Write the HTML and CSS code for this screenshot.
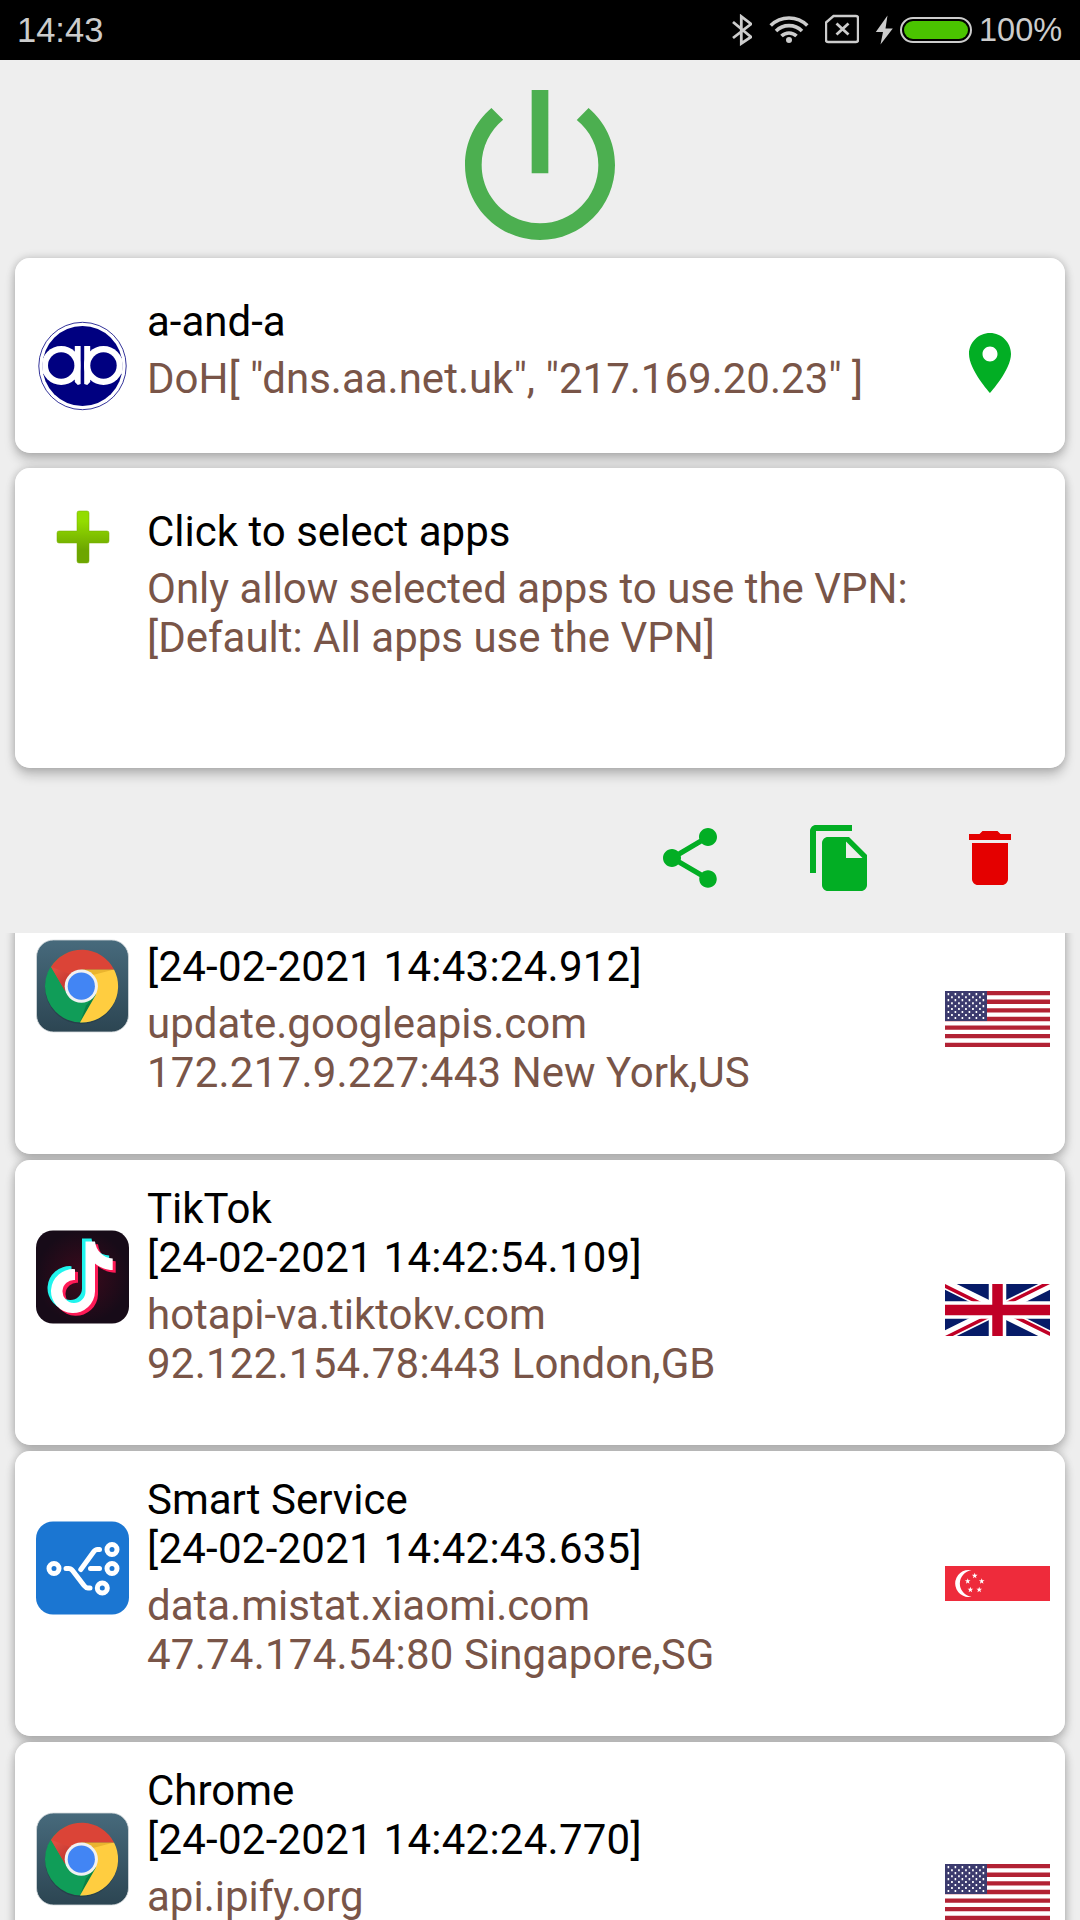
FILE: index.html
```html
<!DOCTYPE html>
<html lang="en">
<head>
<meta charset="utf-8">
<title>VPN</title>
<link rel="stylesheet" href="styles.css">
</head>
<body>
<svg class="defs" width="0" height="0" aria-hidden="true">
  <defs>
    <linearGradient id="slate" x1="0" y1="0" x2="0" y2="1"><stop offset="0" stop-color="#476a7c"/><stop offset="1" stop-color="#2c4552"/></linearGradient>
    <linearGradient id="redShade" x1="15" y1="30" x2="34" y2="50" gradientUnits="userSpaceOnUse"><stop offset="0.1" stop-color="#dd4e41"/><stop offset="1" stop-color="#c0302a"/></linearGradient>
    <linearGradient id="plusFill" x1="0" y1="0" x2="0" y2="1"><stop offset="0.2" stop-color="#93dc00"/><stop offset="0.75" stop-color="#6da600"/></linearGradient>
    <radialGradient id="night"><stop offset="0" stop-color="#3d0a1c"/><stop offset="1" stop-color="#170b18"/></radialGradient>
    <symbol id="chrome" viewBox="0 0 93 93">
      <rect x="0.5" y="0.5" width="92" height="92" rx="17" fill="url(#slate)" stroke="#d5dadd" stroke-width="0.8"/>
      <circle cx="45.5" cy="48" r="36.4" fill="#22343f" opacity="0.5"/>
      <circle cx="45.3" cy="46.7" r="36.3" fill="#109d58"/>
      <path d="M59.7 55L44 83L50 66Z" fill="#0b8045"/>
      <path d="M45.3 30H78A36.3 36.3 0 0 1 44 83L60 55L45.3 46.7Z" fill="#ffcd40"/>
      <path d="M45.3 30H78L57 35.5Z" fill="#eab42f"/>
      <path d="M15 27.3A36.3 36.3 0 0 1 78 30H45.3V46.7L29.2 51.5Z" fill="#db4437"/>
      <path d="M15 27.3L35 35L29.2 51.5Z" fill="url(#redShade)"/>
      <circle cx="45.3" cy="46.7" r="16.6" fill="#f1f1f1"/>
      <circle cx="45.3" cy="46.7" r="13.6" fill="#4285f4"/>
    </symbol>
    <symbol id="usa" viewBox="0 0 105 56">
      <rect width="105" height="56" fill="#fff"/>
      <path d="M0 2.15H105M0 10.75H105M0 19.4H105M0 28H105M0 36.6H105M0 45.2H105M0 53.85H105" stroke="#b22234" stroke-width="4.3"/>
      <rect width="42" height="30" fill="#3c3b6e"/>
      <path d="M2.6 3.2H42M2.6 9.2H42M2.6 15.1H42M2.6 21H42M2.6 27H42" stroke="#fff" stroke-width="2.2" stroke-dasharray="1.6 5.4"/>
      <path d="M6.1 6.2H37M6.1 12.2H37M6.1 18.1H37M6.1 24.1H37" stroke="#fff" stroke-width="2" stroke-dasharray="1.7 5.3"/>
    </symbol>
    <polygon id="star" points="0,-3 .71,-.97 2.85,-.93 1.14,.37 1.76,2.43 0,1.2 -1.76,2.43 -1.14,.37 -2.85,-.93 -.71,-.97"/>
    <path id="note" d="M49.5 11H59C60 20 67 27.5 76.7 28V39.5C70 39.5 64 37 59 33V61A22 22 0 1 1 39 38.7V49.5A11.5 11.5 0 1 0 49.5 61Z"/>
  </defs>
</svg>

<header class="status">
  <span class="status-time">14:43</span>
  <div class="status-right">
    <svg class="st-bt" viewBox="732 14 20 32"><path d="M733 22L751 37L741.300 43.500V16.500L751 24L733 38" fill="none" stroke="#ccc" stroke-width="2.800"/></svg>
    <svg class="st-wifi" viewBox="769 14 40 32"><g fill="none" stroke="#ccc" stroke-width="3.600"><path d="M770.700 25.500a26 26 0 0 1 36.600 0"/><path d="M776 31a18.500 18.500 0 0 1 26 0"/><path d="M781.500 36a10.700 10.700 0 0 1 15 0"/></g><circle cx="789" cy="40" r="3" fill="#ccc"/></svg>
    <svg class="st-sim" viewBox="825 14 34 32"><path d="M833.500 16H856Q858 16 858 18V40Q858 42 856 42H828Q826 42 826 40V22.500Z" fill="none" stroke="#ccc" stroke-width="2.400"/><path d="M836.500 23.500L848.500 34.500M848.500 23.500L836.500 34.500" stroke="#ccc" stroke-width="2.800"/></svg>
    <svg class="st-bolt" viewBox="875 14 18 32"><path d="M887.500 15.500L875.800 32H883L880.500 44.500L892.800 28.500H885.500Z" fill="#ccc"/></svg>
    <svg class="st-batt" viewBox="899 14 74 32"><rect x="901" y="18" width="70" height="24" rx="12" fill="none" stroke="#ccc" stroke-width="2"/><rect x="904" y="21" width="64" height="18" rx="9" fill="#4ac400"/></svg>
    <span class="status-pct">100%</span>
  </div>
</header>

<main class="page">
  <div class="power">
    <svg class="power-icon" viewBox="3 3 18 18"><path fill="#4caf50" d="M13 3h-2v10h2V3zm4.830 2.170l-1.420 1.420C17.990 7.860 19 9.810 19 12c0 3.870-3.130 7-7 7s-7-3.130-7-7c0-2.190 1.010-4.140 2.580-5.420L6.170 5.170C4.230 6.820 3 9.260 3 12c0 4.970 4.030 9 9 9s9-4.030 9-9c0-2.740-1.230-5.180-3.170-6.830z"/></svg>
  </div>

  <section class="card card-server">
    <svg class="logo" viewBox="-46.500 -45 93 90">
      <defs><clipPath id="disc"><circle r="40"/></clipPath></defs>
      <circle r="43.700" fill="#fff" stroke="#000080" stroke-width="0.800"/>
      <circle r="40" fill="#000080"/>
      <g clip-path="url(#disc)" fill="#fff">
        <circle cx="-21.300" cy="-0.500" r="19.600"/><circle cx="21" cy="-0.500" r="19.600"/>
        <path d="M-7.700-20h6v38l-3 1l-3-3zM7.700-20h-6v38l3 1l3-3z"/>
        <rect x="-41" y="-8" width="6" height="16"/><rect x="35" y="-8" width="6" height="16"/>
      </g>
      <rect x="-1.700" y="-22" width="3.200" height="44" fill="#000080"/>
      <circle cx="-21.300" cy="-0.500" r="13.200" fill="#000080"/><circle cx="21" cy="-0.500" r="13.200" fill="#000080"/>
    </svg>
    <div class="text">
      <p class="title">a-and-a</p>
      <p class="detail">DoH[ "dns.aa.net.uk", "217.169.20.23" ]</p>
    </div>
    <svg class="icon pin" viewBox="0 0 24 24"><path d="M12 2C8.130 2 5 5.130 5 9c0 5.250 7 13 7 13s7-7.750 7-13c0-3.870-3.130-7-7-7zm0 9.500c-1.380 0-2.500-1.120-2.500-2.500s1.120-2.500 2.500-2.500 2.500 1.120 2.500 2.500-1.120 2.500-2.500 2.500z"/></svg>
  </section>

  <section class="card card-apps">
    <svg class="plus" viewBox="0 0 54 54"><path d="M23 1H31Q33 1 33 3V21H51Q53 21 53 23V31Q53 33 51 33H33V51Q33 53 31 53H23Q21 53 21 51V33H3Q1 33 1 31V23Q1 21 3 21H21V3Q21 1 23 1Z" fill="url(#plusFill)" stroke="#74ad00" stroke-opacity="0.500"/></svg>
    <div class="text">
      <p class="title">Click to select apps</p>
      <p class="detail">Only allow selected apps to use the VPN:<br>[Default: All apps use the VPN]</p>
    </div>
  </section>

  <nav class="toolbar">
    <svg class="icon" viewBox="0 0 24 24"><path d="M18 16.080c-.760 0-1.440.300-1.960.770L8.910 12.700c.050-.230.090-.460.090-.700s-.040-.470-.090-.700l7.050-4.110c.540.500 1.250.810 2.040.810 1.660 0 3-1.340 3-3s-1.340-3-3-3-3 1.340-3 3c0 .240.040.470.090.700L8.040 9.810C7.500 9.310 6.790 9 6 9c-1.660 0-3 1.340-3 3s1.340 3 3 3c.790 0 1.500-.310 2.040-.810l7.120 4.160c-.050.210-.080.430-.080.650 0 1.610 1.310 2.920 2.920 2.920s2.920-1.310 2.920-2.920-1.310-2.920-2.920-2.920z"/></svg>
    <svg class="icon" viewBox="0 0 24 24"><path d="M16 1H4c-1.100 0-2 .900-2 2v14h2V3h12V1zm-1 4l6 6v10c0 1.100-.900 2-2 2H7.990C6.890 23 6 22.100 6 21l.010-14c0-1.100.890-2 1.990-2h7zm-1 7h5.500L14 6.500V12z"/></svg>
    <svg class="icon icon-delete" viewBox="0 0 24 24"><path d="M6 19c0 1.100.900 2 2 2h8c1.100 0 2-.900 2-2V7H6v12zM19 4h-3.500l-1-1h-5l-1 1H5v2h14V4z"/></svg>
  </nav>

  <div class="log">
    <article class="card entry entry-scrolled">
      <svg class="app"><use href="#chrome"/></svg>
      <div class="text">
        <p class="title"><span class="stamp">[24-02-2021 14:43:24.912]</span></p>
        <p class="detail">update.googleapis.com<br><span class="address">172.217.9.227:443</span> New York,US</p>
      </div>
      <svg class="flag flag-us"><use href="#usa"/></svg>
    </article>

    <article class="card entry">
      <svg class="app" viewBox="0 0 93 93">
        <rect width="93" height="93" rx="17" fill="url(#night)"/>
        <use href="#note" x="3" y="2.700" fill="#fe1a56"/><use href="#note" x="-3.500" y="-3" fill="#20f5ee"/><use href="#note" fill="#fff"/>
      </svg>
      <div class="text">
        <p class="title">TikTok<br><span class="stamp">[24-02-2021 14:42:54.109]</span></p>
        <p class="detail">hotapi-va.tiktokv.com<br><span class="address">92.122.154.78:443</span> London,GB</p>
      </div>
      <svg class="flag flag-gb" viewBox="0 0 60 30" preserveAspectRatio="none">
        <clipPath id="saltire"><path d="M30 15H60V30zV30H0zH0V0zV0H60z"/></clipPath>
        <rect width="60" height="30" fill="#061b68"/>
        <path d="M0 0L60 30M60 0L0 30" stroke="#fff" stroke-width="6"/>
        <path d="M0 0L60 30M60 0L0 30" clip-path="url(#saltire)" stroke="#c00026" stroke-width="4"/>
        <path d="M30 0V30M0 15H60" stroke="#fff" stroke-width="10"/>
        <path d="M30 0V30M0 15H60" stroke="#c00026" stroke-width="6"/>
      </svg>
    </article>

    <article class="card entry">
      <svg class="app" viewBox="0 0 93 93">
        <rect width="93" height="93" rx="17" fill="#1b76d2"/>
        <g fill="none" stroke="#fff" stroke-width="5" stroke-linecap="round" stroke-linejoin="round">
          <circle cx="18" cy="47" r="5"/><circle cx="76" cy="28" r="5"/><circle cx="76" cy="47" r="5"/><circle cx="66.300" cy="66.500" r="5"/>
          <path d="M30 47H32.500Q35 47 36.500 49L48 64Q50 66.500 52 66.500H54M44.800 48L57.500 30.500Q59.300 28 61.500 28H63.500M54.500 47H63.500"/>
        </g>
      </svg>
      <div class="text">
        <p class="title">Smart Service<br><span class="stamp">[24-02-2021 14:42:43.635]</span></p>
        <p class="detail">data.mistat.xiaomi.com<br><span class="address">47.74.174.54:80</span> Singapore,SG</p>
      </div>
      <svg class="flag flag-sg" viewBox="0 0 105 35">
        <rect width="105" height="35" fill="#ee2b3b"/>
        <path d="M26.500 4.300A13.500 13.500 0 1 0 26.500 30.700A13.300 13.300 0 0 1 26.500 4.300Z" fill="#fff"/>
        <g fill="#fff"><use href="#star" x="29.700" y="9.800"/><use href="#star" x="22.700" y="15.200"/><use href="#star" x="36.700" y="15.200"/><use href="#star" x="25.400" y="23.700"/><use href="#star" x="34.200" y="23.700"/></g>
      </svg>
    </article>

    <article class="card entry">
      <svg class="app"><use href="#chrome"/></svg>
      <div class="text">
        <p class="title">Chrome<br><span class="stamp">[24-02-2021 14:42:24.770]</span></p>
        <p class="detail">api.ipify.org</p>
      </div>
      <svg class="flag flag-us"><use href="#usa"/></svg>
    </article>
  </div>
</main>
</body>
</html>
```
FILE: styles.css
```css
* {
  box-sizing: border-box;
}

body {
  margin: 0;
  width: 1080px;
  height: 1920px;
  overflow: hidden;
  display: flex;
  flex-direction: column;
  background: #eee;
  font-family: Roboto, sans-serif;
  font-size: 42px;
  line-height: 49px;
}

p {
  margin: 0;
}

svg {
  display: block;
  flex: none;
}

.defs {
  position: absolute;
}

/* Status bar */
.status {
  flex: none;
  height: 60px;
  padding: 0 16px 0 17px;
  display: flex;
  justify-content: space-between;
  background: #000;
  color: #ccc;
  font-family: "Liberation Sans", Arial, sans-serif;
}

.status-time {
  font-size: 34.5px;
  line-height: 61px;
}

.status-right {
  display: flex;
  padding-top: 14px;
}

.status-right svg {
  height: 32px;
}

.st-bt { width: 20px; margin-right: 17px; }
.st-wifi { width: 40px; margin-right: 16px; }
.st-sim { width: 34px; margin-right: 16px; }
.st-bolt { width: 18px; margin-right: 6px; }
.st-batt { width: 74px; }

.status-pct {
  width: 85px;
  margin-left: 6px;
  font-size: 32.5px;
  line-height: 33px;
}

/* Page */
.page {
  flex: 1;
  min-height: 0;
  display: flex;
  flex-direction: column;
  position: relative;
  z-index: 0;
}

.power {
  flex: none;
  display: flex;
  justify-content: center;
  padding: 30px 0 18px;
}

.power-icon {
  width: 150px;
  height: 150px;
}

.card {
  flex: none;
  position: relative;
  margin: 0 15px;
  display: flex;
  align-items: flex-start;
  background: #fff;
  border-radius: 15px;
}

/* The shadow sits on its own layer so that it never darkens a neighbouring card. */
.card::before {
  content: "";
  position: absolute;
  inset: 0;
  z-index: -1;
  border-radius: 15px;
  box-shadow: 0 8px 11px rgba(0, 0, 0, 0.18), 0 0 9px rgba(0, 0, 0, 0.21);
}

.card-server {
  height: 195px;
  padding: 39px 39px 0 21px;
}

.card-apps {
  height: 300px;
  margin-top: 15px;
  padding: 39px 39px 0 41px;
}

.text {
  flex: 1;
  white-space: nowrap;
}

.title {
  color: #000;
}

.detail {
  margin-top: 8px;
  color: #795548;
}

.stamp {
  letter-spacing: 0.25px;
}

.address {
  letter-spacing: 0.24px;
}

.logo {
  width: 93px;
  height: 90px;
  margin: 24px 18px 0 0;
}

.plus {
  width: 54px;
  height: 54px;
  margin: 3px 37px 0 0;
}

.icon {
  width: 72px;
  height: 72px;
  fill: #02ae24;
}

.pin {
  margin-top: 30px;
}

.toolbar {
  flex: none;
  height: 165px;
  padding: 54px 54px 0 0;
  display: flex;
  justify-content: flex-end;
  gap: 78px;
}

.icon-delete {
  fill: #e40000;
}

/* Connection log */
.log {
  flex: 1;
  min-height: 0;
  overflow: hidden;
  display: flex;
  flex-direction: column;
  gap: 6px;
  position: relative;
  z-index: 0;
}

.entry {
  height: 285px;
  padding: 24px 15px 0 21px;
}

.app {
  width: 93px;
  height: 94px;
  margin: 46px 18px 0 0;
}

.flag {
  width: 105px;
}

.flag-us {
  height: 56px;
  margin-top: 98px;
}

.flag-gb {
  height: 52px;
  margin-top: 100px;
}

.flag-sg {
  height: 35px;
  margin-top: 91px;
}

/* Topmost entry, partly scrolled under the toolbar */
.entry-scrolled {
  height: 221px;
  padding-top: 6px;
  border-radius: 0 0 15px 15px;
}

.entry-scrolled::before {
  top: -20px;
}

.entry-scrolled .app {
  margin-top: 0;
}

.entry-scrolled .text {
  margin-top: 3px;
}

.entry-scrolled .flag {
  margin-top: 52px;
}
```
